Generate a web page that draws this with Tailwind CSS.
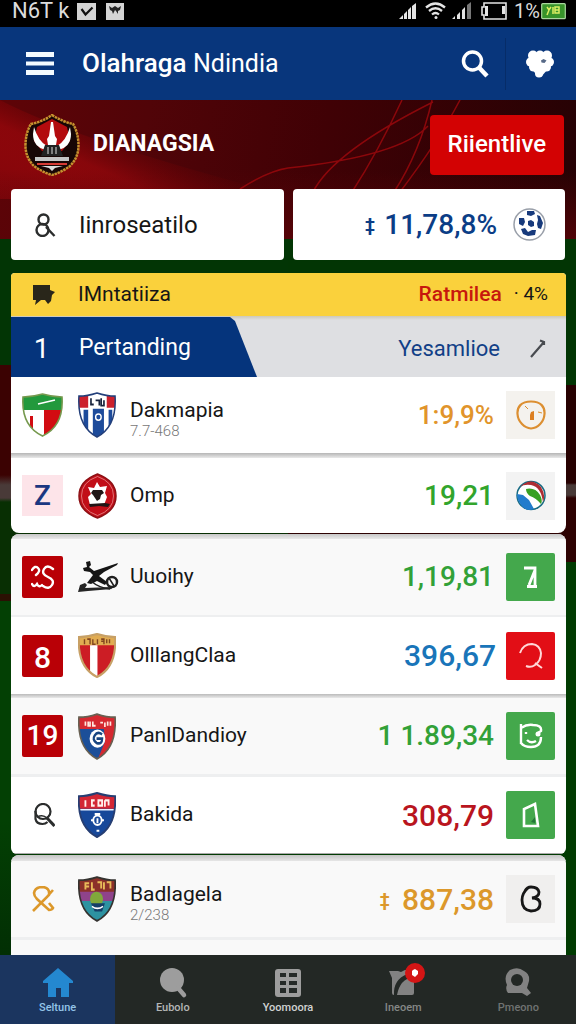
<!DOCTYPE html>
<html lang="id">
<head>
<meta charset="utf-8">
<meta name="viewport" content="width=device-width, initial-scale=1">
<title>Olahraga Ndindia</title>
<script src="https://cdn.jsdelivr.net/npm/@tailwindcss/browser@4"></script>
</head>
<body class="flex min-h-screen flex-col bg-[#033a04] font-['Roboto','Noto_Sans',sans-serif] text-[#161616]">

<!-- Status bar -->
<div class="flex h-[27px] shrink-0 items-start justify-between bg-black pl-3 pr-[10px] text-[#dcdcdc]">
  <div class="flex items-center">
    <span class="text-[22px] leading-[22px]">N6T k</span>
    <svg class="ml-2 mt-[1px] h-[17px] w-[19px]" viewBox="0 0 19 17"><path fill="#d4d4d4" d="M0 0h19v17H0z"/><path d="M4.500 6l4 5.500 7-7" fill="none" stroke="#111" stroke-width="2.200"/></svg>
    <svg class="ml-[10px] mt-[1px] h-[17px] w-[18px]" viewBox="0 0 18 17"><path fill="#d4d4d4" d="M0 0h18v17H0z"/><path d="M3 3l3 2 3-2 3 2 3-2-1 4-2 1v3l-2-3-1-1-1 2-1 2-1-3-2-1z" fill="#222"/></svg>
  </div>
  <div class="flex items-center pt-[1px]">
    <svg class="h-5 w-[19px]" viewBox="0 0 19 20"><path d="M1 18l4-4v4zM6 13l3-3v8H6zM10 9l3-3v12h-3zM14 5l4-3v16h-4z" fill="#e4e4e4"/></svg>
    <svg class="ml-2 h-5 w-[21px]" viewBox="0 0 21 20" fill="none" stroke="#e4e4e4" stroke-width="2.300"><path d="M1 6.500q9.500-8 19 0M4 10q6.500-5.500 13 0M7 13.500q3.500-3 7 0"/><circle cx="11" cy="16.500" r="1.500" fill="#e4e4e4" stroke="none"/></svg>
    <svg class="ml-[6px] h-5 w-[20px]" viewBox="0 0 20 20"><path d="M0 18l3-3v3zM5 14l3-3v7H5zM10 9l3-3v12h-3z" fill="#e4e4e4"/><path d="M15 4l4-3v17h-4z" fill="#777"/></svg>
    <svg class="ml-2 h-5 w-7" viewBox="0 0 28 20"><path d="M4 2h22v16H4v-4H2V6h2z" fill="none" stroke="#e4e4e4" stroke-width="1.600"/><path d="M5 5h3v10H5zM22 5h3v8h-3z" fill="#e4e4e4"/></svg>
    <span class="ml-[6px] text-[20px] leading-5">1%</span>
    <svg class="ml-[1px] h-[18px] w-[25px]" viewBox="0 0 25 18"><rect x=".7" y="1.700" width="23.600" height="15" rx="1" fill="#37932a" stroke="#a8d79c" stroke-width="1.200"/><path d="M6 5l2 3 2-3M8 8l-2 5M12 5v7M14 5h4v6h-4zM14 8h4" stroke="#dcee62" stroke-width="1.500" fill="none"/></svg>
  </div>
</div>

<!-- App bar -->
<header class="flex h-[73px] shrink-0 items-center bg-[#08367c] text-white">
  <button class="ml-[26px] h-7 w-7" aria-label="Menu"><svg viewBox="0 0 28 28" fill="#f3fbff"><path d="M0 2h28v5H0zM0 11.500h28v4H0zM0 20h28v5H0z"/></svg></button>
  <h1 class="ml-7 flex-1 whitespace-nowrap text-[26px] font-medium">Olahraga <span class="text-[25px] font-normal">Ndindia</span></h1>
  <button class="h-7 w-7" aria-label="Cari"><svg viewBox="0 0 28 28" fill="none" stroke="#fff"><circle cx="11.500" cy="11" r="9" stroke-width="3.500"/><path d="M18 17.500l8 8.500" stroke-width="4.500"/></svg></button>
  <span class="ml-[16px] h-[52px] w-px bg-[#062c68]"></span>
  <button class="ml-[20px] mr-[22px] h-[28px] w-7" aria-label="Favorit"><svg viewBox="0 0 28 28" fill="#fff"><circle cx="7" cy="5.500" r="5"/><circle cx="14" cy="5" r="4.500"/><circle cx="21" cy="5.500" r="5"/><circle cx="4.500" cy="12" r="4.500"/><circle cx="23.500" cy="12" r="4.500"/><circle cx="7.500" cy="17" r="4.500"/><circle cx="20.500" cy="17" r="4.500"/><circle cx="13" cy="23.500" r="4"/><path d="M6 5h16v14l-7 8h-3l-6-8z"/><path d="M15 10.500l2.500-1.500 3 1.500-2 2.500-3-.5z" fill="#566987"/></svg></button>
</header>

<main class="relative isolate flex flex-1 flex-col">
  <!-- Stadium backdrop -->
  <div class="absolute inset-0 -z-10 grid grid-cols-2 overflow-hidden" aria-hidden="true">
    <div class="bg-[linear-gradient(#023505_0_265px,#3b0202_265px_375px,#493a38_385px_398px,#082f03_402px_494px,#2b1003_494px_501px,#034004_501px_720px,#022f04)]"></div>
    <div class="bg-[linear-gradient(#023504_0_285px,#270101_285px_383px,#493a38_385px_395px,#2d0202_398px_462px,#013b02_462px)]"></div>
    <div class="absolute inset-x-0 top-0 h-[139px] bg-[linear-gradient(100deg,#5e0407_0%,#510408_25%,#400105_55%,#250204_100%)]">
      <svg class="h-full w-full" viewBox="0 0 576 139" preserveAspectRatio="none" fill="none">
        <defs>
          <linearGradient id="glow" gradientUnits="userSpaceOnUse" x1="60" y1="100" x2="100" y2="10"><stop offset="0" stop-color="#8b060b" stop-opacity=".9"/><stop offset=".45" stop-color="#a8080d" stop-opacity=".6"/><stop offset="1" stop-color="#600" stop-opacity="0"/></linearGradient>
          <linearGradient id="fall" x1="0" y1="0" x2="0" y2="1"><stop offset="0" stop-color="#5a0408" stop-opacity="0"/><stop offset="1" stop-color="#5a0408" stop-opacity=".8"/></linearGradient>
        </defs>
        <path d="M0 0Q80 42 300 99H0z" fill="url(#glow)"/>
        <path d="M0 70h576v69H0z" fill="url(#fall)"/>
        <path d="M240 89q28-18 48-21 112-12 140-42M313 92q20-40 120-90M352 92q26-40 50-92M394 92q26-40 38-92M400 92q38-50 60-92" stroke="#a60a0e" stroke-width="1.500" opacity=".75"/>
      </svg>
    </div>
  </div>

  <!-- Club banner -->
  <section class="flex h-[89px] items-center pl-6 pr-3">
    <svg class="h-[62px] w-[56px]" viewBox="0 0 56 62" aria-hidden="true">
      <path d="M28 1q11 7 21 9 5 8 5.500 20Q55 43 46 52q-8 6-18 9-10-3-18-9Q1 43 1.500 30 2 18 7 10q11-2 21-9z" fill="#180605" stroke="#c6912f" stroke-width="2.500" stroke-dasharray="2.500 .7"/>
      <path d="M28 5l15 8 3 14-8 10H18l-8-10 3-14z" fill="#b30b0e"/>
      <path d="M27 8h2l2 14 2 3-1 6h-8l-1-6 2-3zM10 13q4 14 13 19l-1 4q-13-3-13-16zM46 13q-4 14-13 19l1 4q13-3 13-16z" fill="#fff"/>
      <path d="M21 31h14l4 11H17z" fill="#222"/><path d="M24 33v7M28 33v7M32 33v7" stroke="#ddd"/>
      <path d="M11 43h34v4H11z" fill="#c5c5c5"/><path d="M13 49h30v2H13z" fill="#d73a33"/><path d="M17 52h22l-8 2-3 3-3-3z" fill="#ddd"/>
    </svg>
    <h2 class="ml-[13px] flex-1 text-[23px] font-bold text-white">DIANAGSIA</h2>
    <button class="h-[60px] rounded bg-[#d30203] px-[18px] pb-[2px] text-[24px] font-medium text-white">Riientlive</button>
  </section>

  <!-- Search and total -->
  <section class="mx-[11px] grid grid-cols-2 gap-[9px]">
    <label class="flex h-[71px] items-center rounded bg-white pl-[23px] pr-3">
      <svg class="h-6 w-[22px] shrink-0" viewBox="0 0 22 24" fill="none" stroke="#2b2d2d" stroke-width="2.400"><circle cx="9.500" cy="6.500" r="5"/><circle cx="8.500" cy="17" r="6"/><path d="M12 14l8.500 9"/></svg>
      <input class="ml-[23px] w-0 flex-1 bg-transparent text-[24px] text-[#161616] outline-none" type="text" value="Iinroseatilo" aria-label="Pencarian">
    </label>
    <div class="flex h-[71px] items-center justify-end rounded bg-white pr-[19px] text-[#0b3d86]">
      <span class="mr-[9px] text-[18px] font-bold">‡</span>
      <span class="text-[28px] font-medium">11,78,8%</span>
      <svg class="ml-4 h-[35px] w-[33px]" viewBox="0 0 33 35"><circle cx="16.500" cy="17.500" r="15.500" fill="#fff" stroke="#999fa9" stroke-width="1.500"/><g fill="#173a7c"><path d="M14 4h7l1 3-4 2-4-1zM15 14l3-1 3 2v4l-3 1-3-2zM6 11l5 0 1 4-2 4-4-2zM24 8l3 1 3 7-2 6-3-1-1-4 1-4zM8 22l4-1 3 4 4-2 4 0-1 5-7 1-5-2z"/></g></svg>
    </div>
  </section>

  <section class="mx-[10px] mt-[13px] flex flex-1 flex-col gap-px pl-px">
    <div class="overflow-hidden rounded-t rounded-b-lg bg-white">
      <div class="flex h-[43px] items-center bg-[#fad13c] pl-[21px] pr-[18px]">
        <svg class="h-6 w-6" viewBox="0 0 24 24" fill="#29261a"><path d="M1 2h17v5l5 2-3 3-1 6-3 3-3-4H9l-6 5 1-5H1z"/></svg>
        <span class="ml-[22px] flex-1 text-[21px]">IMntatiiza</span>
        <span class="text-[21px] font-medium text-[#c7180d]">Ratmilea</span>
        <span class="ml-3 text-[19px]">· 4%</span>
      </div>
      <div class="flex h-[61px] items-center bg-[linear-gradient(#cdc9b8,#dedfe2_4px,#dedfe2)] text-[#123f87]">
        <button class="flex h-full w-[246px] items-center bg-[#05347c] pt-1 text-white [clip-path:polygon(0_1px,219px_1px,224px_5px,246px_100%,0_100%)]">
          <span class="w-[61px] text-center text-[28px]">1</span>
          <span class="ml-[7px] text-[23px]">Pertanding</span>
        </button>
        <button class="ml-auto pt-1 text-[22px]">Yesamlioe</button>
        <svg class="ml-[29px] mr-[19px] mt-1 h-5 w-[18px]" viewBox="0 0 18 20" fill="none" stroke="#484b50" stroke-width="2.200"><path d="M2 18L15 3M11 1.500l4 1.500v3"/></svg>
      </div>
      <ul>
        <li class="flex h-[76px] items-center px-[11px]">
          <svg class="h-11 w-[41px]" viewBox="0 0 41 44"><defs><clipPath id="shield"><path d="M1 4Q10 4 20.500 1 31 4 40 4q2 29-19.500 39Q-1 33 1 4z"/></clipPath></defs><g clip-path="url(#shield)"><path fill="#fff" d="M0 0h41v44H0z"/><path fill="#22993c" d="M0 0h41v17H0z"/><path fill="#d20c11" d="M22 17h19v27H22zM8 23h3v12H8z"/><path d="M16 11l17-4" stroke="#fff" stroke-width="1.500"/></g><path d="M1 4Q10 4 20.500 1 31 4 40 4q2 29-19.500 39Q-1 33 1 4z" fill="none" stroke="#76994e" stroke-width="1.600"/></svg>
          <svg class="ml-[15px] h-[46px] w-[38px]" viewBox="0 0 41 44" preserveAspectRatio="none"><g clip-path="url(#shield)"><path fill="#fff" d="M0 0h41v44H0z"/><path fill="#cc202c" d="M0 0h11v15H0zM31 0h10v15H31z"/><path fill="#1d4b9b" d="M6 17h5v27H6zM16 16h12v28H16zM33 17h4v27h-4z"/><path d="M14 6v6h3M19 8h4v5M25 6v7h3V8" stroke="#16223c" stroke-width="1.800" fill="none"/><circle cx="22" cy="24" r="3" fill="none" stroke="#fff" stroke-width="1.500"/></g><path d="M1 4Q10 4 20.500 1 31 4 40 4q2 29-19.500 39Q-1 33 1 4z" fill="none" stroke="#233f7a" stroke-width="1.600"/></svg>
          <div class="ml-[14px] flex-1 pt-2"><div class="text-[21px] leading-[24px]">Dakmapia</div><div class="text-[15px] leading-[18px] font-light text-[#777]">7.7-468</div></div>
          <span class="text-[26px] font-medium text-[#e1942b]">1:9,9%</span>
          <button class="ml-3 grid h-12 w-[49px] place-items-center bg-[#f4f2ee]" aria-label="Waktu"><svg class="h-[30px] w-[30px]" viewBox="0 0 30 30" fill="none" stroke="#dc8f31" stroke-width="2.200"><path d="M15 1.500C5 1.500 1 7 1.500 14c.5 8 7 14 13.500 14.500C22 28 28 22 28.500 14 29 7 25 1.500 15 1.500z"/><path d="M9 6l3 3M22 12l4 1" stroke-width="1"/><path d="M15 12l3-1v9h-4v-5z" fill="#dc7f21" stroke="none"/></svg></button>
        </li>
        <li class="h-[5px] bg-linear-to-b from-[#b6b6b6] to-[#e9e9e9]" aria-hidden="true"></li>
        <li class="flex h-[75px] items-center px-[11px]">
          <span class="grid h-[41px] w-[41px] place-items-center bg-[#fde4e9] text-[28px] font-medium text-[#1b3781]">Z</span>
          <svg class="ml-[15px] h-[46px] w-[39px]" viewBox="0 0 39 46"><path d="M19.500 1Q38 8 38 23T19.500 45Q1 38 1 23T19.500 1z" fill="#c20e18" stroke="#8d1115" stroke-width="1.500"/><path d="M19.500 3.500Q35.500 9 35.500 23T19.500 42.500Q3.500 37 3.500 23T19.500 3.500z" fill="none" stroke="#e9a0a0" stroke-width=".7"/><path d="M19 9l3 5 7-1-2 7 2 4-3 8H12l-2-8 3-3-3-7 6 1z" fill="#fff"/><path d="M15 17h9l2 3-3 2-1 4-3 2-2-3-2-3-2-2zM11 31l16-1 5 1-2 3-9-1-9 1z" fill="#211516"/></svg>
          <span class="ml-[13px] flex-1 text-[21px]">Omp</span>
          <span class="text-[28px] font-medium text-[#32a52c]">19,21</span>
          <button class="ml-3 grid h-12 w-[49px] place-items-center bg-[#f3f3f3]" aria-label="Bola"><svg class="h-[31px] w-[30px]" viewBox="0 0 30 31"><circle cx="15" cy="15.500" r="14" fill="#fff" stroke="#176b83" stroke-width="1.500"/><path d="M4 7Q15-4 25 7q5 8 2 15-2-15-12-17Q8 4 4 7z" fill="#ae2e34"/><path d="M10 9q9-2 14 6 3 6 1 9-5-6-11-8-4-3-4-7z" fill="#38a023"/><path d="M1 14l6 1 6 5 5 9q-8 3-13-4-4-5-4-11z" fill="#227ccc"/></svg></button>
        </li>
      </ul>
    </div>

    <ul class="overflow-hidden rounded-t-lg rounded-b-md bg-white">
      <li class="h-[5px] bg-linear-to-b from-[#c7c7c7] to-[#e9e9e9]" aria-hidden="true"></li>
      <li class="flex h-[76px] items-center bg-[#f9f9f9] px-[11px]">
        <span class="grid h-[42px] w-[41px] place-items-center rounded-xs bg-[#b90006]"><svg class="h-6 w-6" viewBox="0 0 24 24" fill="none" stroke="#fff" stroke-width="2.400" stroke-linecap="round"><path d="M1 5q3-5 6-2t-2 7M1 19q2 4 5 0 2 4 5 1M22 4q-6-5-9 0t4 8q7 3 4 8t-9 1"/></svg></span>
        <svg class="ml-[14px] h-[34px] w-[42px]" viewBox="0 0 42 34"><path d="M9 2l4-1 1 4-2 2 5 4 24-8-1 2-13 7-5 4 8 6-2 3-8-4-6 3-4-1 6-8-3-3-6-1-1-3 4-1z" fill="#161616"/><path d="M1 32l2-7 5-2 2 2-2 3 26-1 1 2-24 2z" fill="#252525"/><circle cx="35" cy="22" r="5" fill="none" stroke="#202020" stroke-width="2.500"/><path d="M14 21q8 7 19 8M32 18l5 8" fill="none" stroke="#202020" stroke-width="1.500"/></svg>
        <span class="ml-[11px] flex-1 text-[21px]">Uuoihy</span>
        <span class="text-[28px] font-medium text-[#32a138]">1,19,81</span>
        <button class="ml-3 grid h-12 w-[49px] place-items-center rounded-xs bg-[#44a84c]" aria-label="7"><svg class="h-6 w-[14px]" viewBox="0 0 14 24" fill="none" stroke="#fff" stroke-width="2.800"><path d="M0 3h11v17M11 5L5 20M3 21.500h10"/></svg></button>
      </li>
      <li class="h-[2px] bg-[#eeeff0]" aria-hidden="true"></li>
      <li class="flex h-[77px] items-center px-[11px]">
        <span class="grid h-[42px] w-[41px] place-items-center rounded-xs bg-[#b90006] text-[30px] font-medium text-white">8</span>
        <svg class="ml-[15px] h-[45px] w-[38px]" viewBox="0 0 41 44" preserveAspectRatio="none"><g clip-path="url(#shield)"><path fill="#cc1d25" d="M0 0h41v44H0z"/><path fill="#e1ac52" d="M0 0h41v12H0z"/><path fill="#fff" d="M13 12h8v32h-8z"/><path d="M7 6v5M10 6h3v5M16 6v5h3M21 6v5M25 6h3v5M25 8h3M31 6v4M34 6v4" stroke="#81451f" stroke-width="1.500" fill="none"/></g><path d="M1 4Q10 4 20.500 1 31 4 40 4q2 29-19.500 39Q-1 33 1 4z" fill="none" stroke="#c7a066" stroke-width="2.200"/></svg>
        <span class="ml-[14px] flex-1 text-[21px]">OlllangClaa</span>
        <span class="text-[30px] font-medium text-[#1975b9]">396,67</span>
        <button class="ml-[10px] grid h-12 w-[49px] place-items-center rounded-xs bg-[#e20e16]" aria-label="Cari"><svg class="h-7 w-6" viewBox="0 0 24 28" fill="none" stroke="#ffd8d8" stroke-width="2"><path d="M1 11Q4 2 13 2q8 1 9 9 0 8-6 12-4 3-9 1M16 21l7 5"/></svg></button>
      </li>
      <li class="h-1 bg-linear-to-b from-[#bbb] to-[#e9e9e9]" aria-hidden="true"></li>
      <li class="flex h-[76px] items-center bg-[#f9f9f9] px-[11px]">
        <span class="grid h-[42px] w-[41px] place-items-center rounded-xs bg-[#b90006] text-[28px] font-medium text-white">19</span>
        <svg class="ml-[15px] h-[47px] w-[38px]" viewBox="0 0 41 44" preserveAspectRatio="none"><g clip-path="url(#shield)"><path fill="#1c4f99" d="M0 0h41v44H0z"/><path fill="#d52830" d="M0 0h41v44H21l8-17-1-12H0z"/><path d="M8 8v4M11 8v4h2V8M16 8v4h3M24 9h3M29 9v4M32 8v4M35 8v4" stroke="#ffe6df" stroke-width="1.800" fill="none"/><circle cx="21" cy="24" r="8.500" fill="#fff"/><path d="M26 20q-5-3-8 1t2 7q6 2 6-4h-6" fill="none" stroke="#184581" stroke-width="2.500"/></g><path d="M1 4Q10 4 20.500 1 31 4 40 4q2 29-19.500 39Q-1 33 1 4z" fill="none" stroke="#686052" stroke-width="1.800"/></svg>
        <span class="ml-[14px] flex-1 text-[21px]">PanlDandioy</span>
        <span class="text-[28px] font-medium text-[#32a138]">1 1.89,34</span>
        <button class="ml-3 grid h-12 w-[49px] place-items-center rounded-xs bg-[#44a84c]" aria-label="Detail"><svg class="h-[26px] w-6" viewBox="0 0 24 26" fill="none" stroke="#fff" stroke-width="2.400"><path d="M2 1v20M2 5q6-4 12-3 9 0 8 6-2 1-4 3M2 20q3 4 10 4 10 0 10-10M8 17q4 4 9 1M7 9v2"/><circle cx="19" cy="11" r="2.500" fill="#fff" stroke="none"/></svg></button>
      </li>
      <li class="h-[3px] bg-[#eeeff0]" aria-hidden="true"></li>
      <li class="flex h-[77px] items-center border-b border-[#aaa] px-[11px]">
        <svg class="ml-3 mr-2 h-6 w-[21px]" viewBox="0 0 21 24" fill="none" stroke="#2b2d2d"><circle cx="9" cy="8.500" r="7.500" stroke-width="2.200"/><path d="M1.500 8v8q1 5 7 5 3 0 5-2" stroke-width="2.200"/><path d="M3 14q6-3 10 1" stroke-width="1.500"/><path d="M12.500 14.500l8 8.500" stroke-width="3"/></svg>
        <svg class="ml-[15px] h-[46px] w-[38px]" viewBox="0 0 41 44" preserveAspectRatio="none"><g clip-path="url(#shield)"><path fill="#17489a" d="M0 0h41v44H0z"/><path fill="#d32634" d="M0 0h41v16H0z"/><path d="M8 8v6M18 8h-3v5h3M22 8v5h4V8zM29 8v6M29 8h4v5" stroke="#fff0ec" stroke-width="2" fill="none"/><path d="M1 17h39" stroke="#eaf1ff" stroke-width="1.300"/><circle cx="21" cy="27" r="4.500" fill="none" stroke="#fff" stroke-width="2"/><path d="M18 21h6M14 27h3M25 27h3M21 25v5M20 37h3" stroke="#fff" stroke-width="2"/></g><path d="M1 4Q10 4 20.500 1 31 4 40 4q2 29-19.500 39Q-1 33 1 4z" fill="none" stroke="#263e73" stroke-width="2"/></svg>
        <span class="ml-[14px] flex-1 text-[21px]">Bakida</span>
        <span class="text-[30px] font-medium text-[#b9151e]">308,79</span>
        <button class="ml-3 grid h-12 w-[49px] place-items-center rounded-xs bg-[#44a84c]" aria-label="Statistik"><svg class="h-[26px] w-[18px]" viewBox="0 0 18 26" fill="none" stroke="#fff" stroke-width="2.600"><path d="M2 24V7l11-5 3 22z"/><path d="M9 20l4-5v6z" fill="#25763a" stroke="none"/></svg></button>
      </li>
    </ul>

    <ul class="flex-1 overflow-hidden rounded-t-lg bg-[#f9f9f9]">
      <li class="h-[6px] bg-linear-to-b from-[#c4c4c4] to-[#e6e6e6]" aria-hidden="true"></li>
      <li class="flex h-[76px] items-center px-[11px]">
        <svg class="ml-[10px] mr-2 h-[26px] w-[23px]" viewBox="0 0 23 26" fill="none" stroke="#dc982b" stroke-width="2.600"><path d="M1 25L17 9q1-7-6-8-8 0-9 6 0 3 3 6l12 11q3 0 4-2l-4-5M21 4l-7 8"/></svg>
        <svg class="ml-[15px] h-[46px] w-[38px]" viewBox="0 0 41 44" preserveAspectRatio="none"><g clip-path="url(#shield)"><path fill="#8f438b" d="M0 0h41v44H0z"/><path fill="#8b3029" d="M0 0h41v15H0z"/><path fill="#2d92a1" d="M0 24h41v20H0z"/><path d="M8 6v7M8 7h4M8 10h4M15 6v7h3M21 6h4v6M28 6v7M31 6h4v6" stroke="#e7ba59" stroke-width="2" fill="none"/><circle cx="20" cy="22" r="7" fill="#80a83b"/><path d="M14 26h15l-3 8h-8z" fill="#163e67"/><path d="M15 29q6 4 12 0" stroke="#fff" stroke-width="1.500" fill="none"/></g><path d="M1 4Q10 4 20.500 1 31 4 40 4q2 29-19.500 39Q-1 33 1 4z" fill="none" stroke="#353330" stroke-width="1.800"/></svg>
        <div class="ml-[14px] flex-1 pt-2"><div class="text-[21px] leading-[24px]">Badlagela</div><div class="text-[15px] leading-[18px] font-light text-[#777]">2/238</div></div>
        <span class="mr-[12px] text-[18px] font-bold text-[#dc982b]">‡</span>
        <span class="text-[30px] font-medium text-[#dc982b]">887,38</span>
        <button class="ml-3 grid h-12 w-[49px] place-items-center bg-[#f0efee]" aria-label="3"><svg class="h-7 w-[22px]" viewBox="0 0 22 28" fill="none" stroke="#171717" stroke-width="2.800"><path d="M5 6q2-4 6-4 7 0 8 5 0 5-7 6 8 0 8 6 0 7-9 7-9-1-9-11Q2 8 8 3"/></svg></button>
      </li>
      <li class="h-[3px] bg-[#eeeff0]" aria-hidden="true"></li>
    </ul>
  </section>
</main>

<!-- Bottom navigation -->
<nav class="grid h-[69px] shrink-0 grid-cols-5 bg-[#232825] text-[11px] font-medium text-[#b4b6b5]">
  <a href="#" class="flex flex-col items-center bg-[#1b355f] pt-3 text-[#93c4e8]">
    <svg class="h-8 w-8" viewBox="0 0 32 32"><path d="M16 1l15 13v2h-4v14h-8v-9h-5v9H6V16H1v-2z" fill="#2488d0"/></svg>
    <span class="leading-[18px]">Seltune</span>
  </a>
  <a href="#" class="flex flex-col items-center pt-3">
    <svg class="h-8 w-8" viewBox="0 0 32 32"><circle cx="15" cy="13" r="12" fill="#9d9d9d"/><path d="M21 21l6 7" stroke="#9d9d9d" stroke-width="4.500" stroke-linecap="round"/></svg>
    <span class="leading-[18px]">Eubolo</span>
  </a>
  <a href="#" class="flex flex-col items-center pt-3">
    <svg class="h-8 w-8" viewBox="0 0 32 32"><rect x="3" y="2" width="26" height="28" rx="3" fill="#9d9d9d"/><path d="M8 6h6v4H8zM17 6h8v4h-8zM8 14h6v4H8zM17 14h8v4h-8zM8 21h6v5H8zM17 21h8v5h-8z" fill="#252a28"/></svg>
    <span class="leading-[18px] text-[#d0d2d1]">Yoomoora</span>
  </a>
  <a href="#" class="flex flex-col items-center pt-3 text-[#858786]">
    <span class="relative">
      <svg class="h-8 w-8" viewBox="0 0 32 32"><path d="M2 4h9l3 1 4-2h9v23q0 2-2 2H7q-2 0-2-2V11z" fill="#828282"/><path d="M7 28q-1-15 13-21l6-1v4q-13 2-16 18z" fill="#232825"/></svg>
      <span class="absolute -right-[6px] -top-[4px] grid h-5 w-5 place-items-center rounded-full bg-[#d41515]"><svg class="h-2 w-2" viewBox="0 0 8 8"><path d="M2 1l2-1 3 2v3L4 8 1 6V2z" fill="#fff"/></svg></span>
    </span>
    <span class="leading-[18px]">Ineoem</span>
  </a>
  <a href="#" class="flex flex-col items-center pt-3 text-[#707372]">
    <svg class="h-8 w-8" viewBox="0 0 32 32"><path d="M8 3q8-4 14 1 6 3 5 10l-2 7 4 5-4 3-5-3H6q-3-4-1-8-4-9 3-15z" fill="#828282"/><circle cx="15" cy="13" r="6" fill="#232825"/></svg>
    <span class="leading-[18px]">Pmeono</span>
  </a>
</nav>
</body>
</html>
